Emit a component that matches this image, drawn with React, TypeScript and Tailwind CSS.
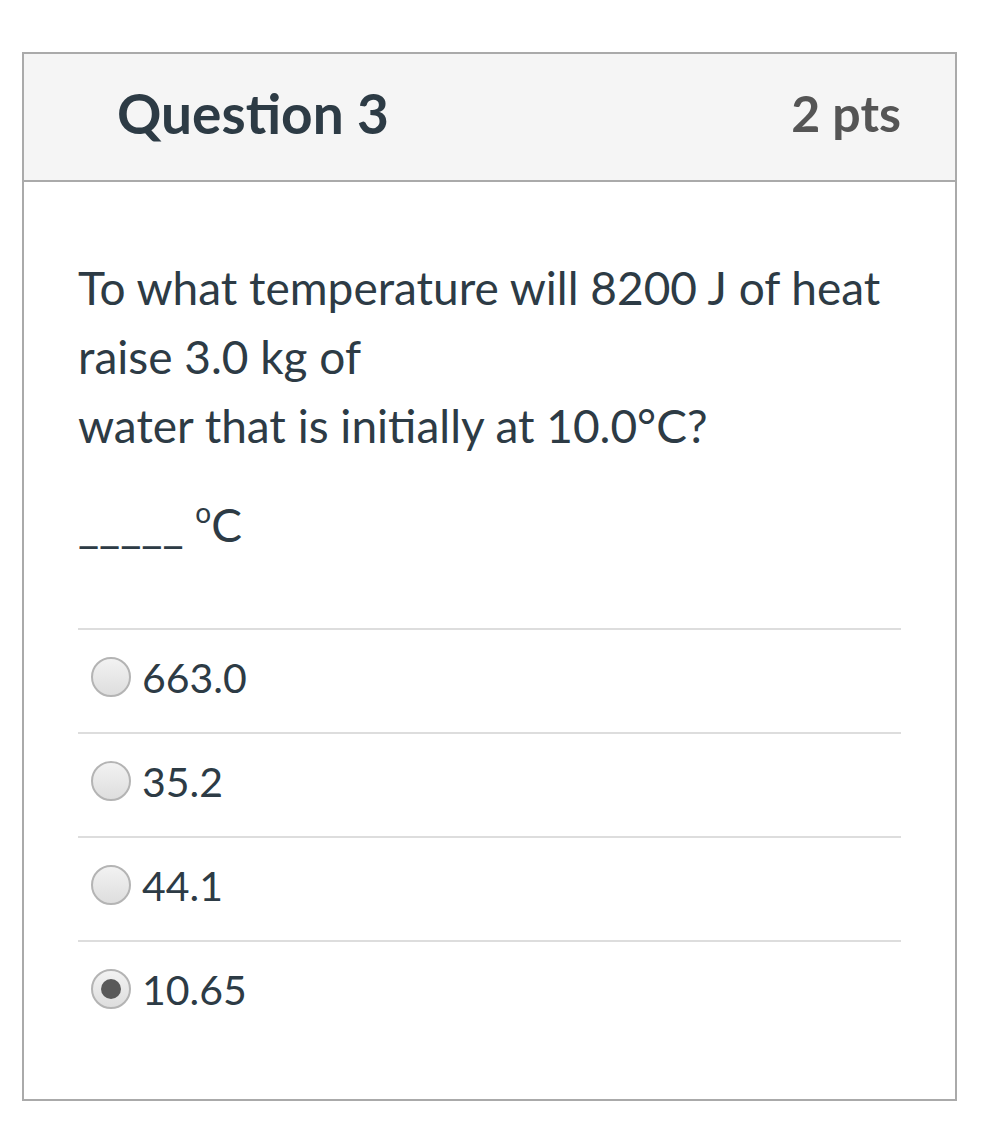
import React from "react";

const options = [
  { label: "663.0", checked: false },
  { label: "35.2", checked: false },
  { label: "44.1", checked: false },
  { label: "10.65", checked: true },
];

function Radio({ checked }: { checked: boolean }) {
  return (
    <span className="flex h-[40px] w-[40px] shrink-0 items-center justify-center rounded-full border-2 border-[#b4b4b4] bg-gradient-to-b from-[#f2f2f2] to-[#dedede]">
      {checked && <span className="h-[20px] w-[20px] rounded-full bg-[#595959]" />}
    </span>
  );
}

export default function App() {
  return (
    <div
      className="min-h-[1139px] w-[1000px] bg-white pt-[52px] pl-[22px]"
      style={{ fontFamily: "Lato, 'Noto Sans', sans-serif" }}
    >
      <div className="w-[935px] border-2 border-[#aaaaaa] text-[#2d3b45]">
        <div className="flex h-[128px] items-center justify-between border-b-2 border-[#aaaaaa] bg-[#f5f5f5] pb-[8px] pl-[93px] pr-[54px]">
          <div className="text-[55px] font-bold leading-none">Question 3</div>
          <div className="text-[50px] font-bold leading-none text-[#555555]">2 pts</div>
        </div>
        <div className="px-[54px] pt-[71px] pb-[55px]">
          <div className="text-[46px] leading-[69px]">
            <p>To what temperature will 8200 J of heat</p>
            <p>raise 3.0 kg of</p>
            <p>water that is initially at 10.0°C?</p>
            <p className="mt-[30px]">
              _____ <span className="relative -top-[19px] text-[28px]">o</span>C
            </p>
          </div>
          <div className="mt-[62px]">
            {options.map((o) => (
              <div
                key={o.label}
                className="flex h-[104px] items-center gap-[11px] border-t-2 border-[#dddddd] pb-[8px] pl-[13px]"
              >
                <Radio checked={o.checked} />
                <span className="text-[41px] leading-none">{o.label}</span>
              </div>
            ))}
          </div>
        </div>
      </div>
    </div>
  );
}
